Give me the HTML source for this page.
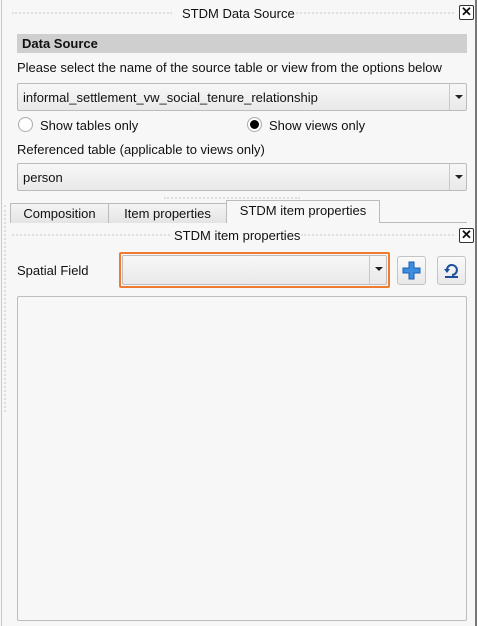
<!DOCTYPE html>
<html><head><style>
*{margin:0;padding:0;box-sizing:border-box}
body{width:477px;height:626px;background:#f7f7f7;font-family:"Liberation Sans",sans-serif;font-size:13px;color:#111;position:relative;overflow:hidden}
.a{position:absolute}
.dot{border-top:2px dotted #dedede;height:0}
.dotv{border-left:2px dotted #dedede;width:0}
.close{width:15px;height:15px;border:1px solid #333;border-radius:2px;background:#fff;font-size:13px;line-height:12px;text-align:center;font-weight:bold}
.combo{border:1px solid #bdbdbd;border-radius:2px;background:linear-gradient(#f7f7f7,#e9e9e9);height:28px;line-height:27px;padding-left:5px}
.combo .arr{position:absolute;right:0;top:0;width:17px;height:26px;border-left:1px solid #c8c8c8}
.combo .arr:after{content:"";position:absolute;left:5px;top:11px;border-left:4px solid transparent;border-right:4px solid transparent;border-top:4px solid #222}
.tab{border:1px solid #bbb;border-bottom:none;background:linear-gradient(#f4f4f4,#e4e4e4);height:20px;line-height:19px;text-align:center}
.btn{width:29px;height:29px;border:1px solid #c4c4c4;border-radius:3px;background:linear-gradient(#fafafa,#e8e8e8)}
</style></head><body>
<div class="a" style="left:1px;top:0;width:1px;height:626px;background:#c8c8c8"></div>
<div class="a" style="left:475px;top:0;width:2px;height:626px;background:#777"></div>
<div class="a dot" style="left:12px;top:12px;width:160px"></div>
<div class="a dot" style="left:296px;top:12px;width:158px"></div>
<div class="a" style="left:182px;top:6px">STDM Data Source</div>
<div class="a close" style="left:459px;top:5px">✕</div>
<div class="a" style="left:17px;top:34px;width:450px;height:19px;background:#cfcfcf;font-weight:bold;padding-left:5px;line-height:19px">Data Source</div>
<div class="a" style="left:17px;top:60px">Please select the name of the source table or view from the options below</div>
<div class="a combo" style="left:17px;top:83px;width:450px">informal_settlement_vw_social_tenure_relationship<div class="arr"></div></div>
<div class="a" style="left:18px;top:117px;width:15px;height:15px;border:1px solid #aaa;border-radius:50%;background:#fff"></div>
<div class="a" style="left:40px;top:118px">Show tables only</div>
<div class="a" style="left:247px;top:117px;width:15px;height:15px;border:1px solid #aaa;border-radius:50%;background:#fff"><div style="margin:2px;width:9px;height:9px;border-radius:50%;background:#000"></div></div>
<div class="a" style="left:269px;top:118px">Show views only</div>
<div class="a" style="left:17px;top:142px">Referenced table (applicable to views only)</div>
<div class="a combo" style="left:17px;top:163px;width:450px">person<div class="arr"></div></div>
<div class="a dot" style="left:164px;top:197px;width:136px"></div>
<div class="a dotv" style="left:4px;top:205px;height:207px"></div>
<div class="a" style="left:10px;top:222px;width:457px;height:1px;background:#bbb"></div>
<div class="a tab" style="left:10px;top:203px;width:99px">Composition</div>
<div class="a tab" style="left:108px;top:203px;width:119px">Item properties</div>
<div class="a tab" style="left:226px;top:200px;width:154px;height:23px;background:#f7f7f7">STDM item properties</div>
<div class="a dot" style="left:12px;top:234px;width:158px"></div>
<div class="a dot" style="left:301px;top:234px;width:153px"></div>
<div class="a" style="left:174px;top:228px">STDM item properties</div>
<div class="a close" style="left:459px;top:228px">✕</div>
<div class="a" style="left:17px;top:263px">Spatial Field</div>
<div class="a" style="left:119px;top:252px;width:271px;height:36px;border:2px solid #ee7b30;border-radius:2px"></div>
<div class="a combo" style="left:122px;top:255px;width:265px;height:30px"><div class="arr" style="height:28px"></div></div>
<div class="a btn" style="left:397px;top:256px"><svg width="27" height="27" viewBox="0 0 27 27"><path d="M11 5h5v6h6v5h-6v6h-5v-6H5v-5h6z" fill="#3b8de0" stroke="#1c5fb0" stroke-width="1"/></svg></div>
<div class="a btn" style="left:437px;top:256px"><svg width="27" height="27" viewBox="0 0 27 27"><path d="M9 14a5 5 0 1 1 5 4" fill="none" stroke="#1b4f9a" stroke-width="2"/><path d="M6 12l3 4 3-4z" fill="#1b4f9a"/><path d="M7 20h13" stroke="#1b4f9a" stroke-width="2"/></svg></div>
<div class="a" style="left:17px;top:296px;width:450px;height:325px;border:1px solid #bdbdbd;border-radius:2px;background:#f7f7f7"></div>
</body></html>
